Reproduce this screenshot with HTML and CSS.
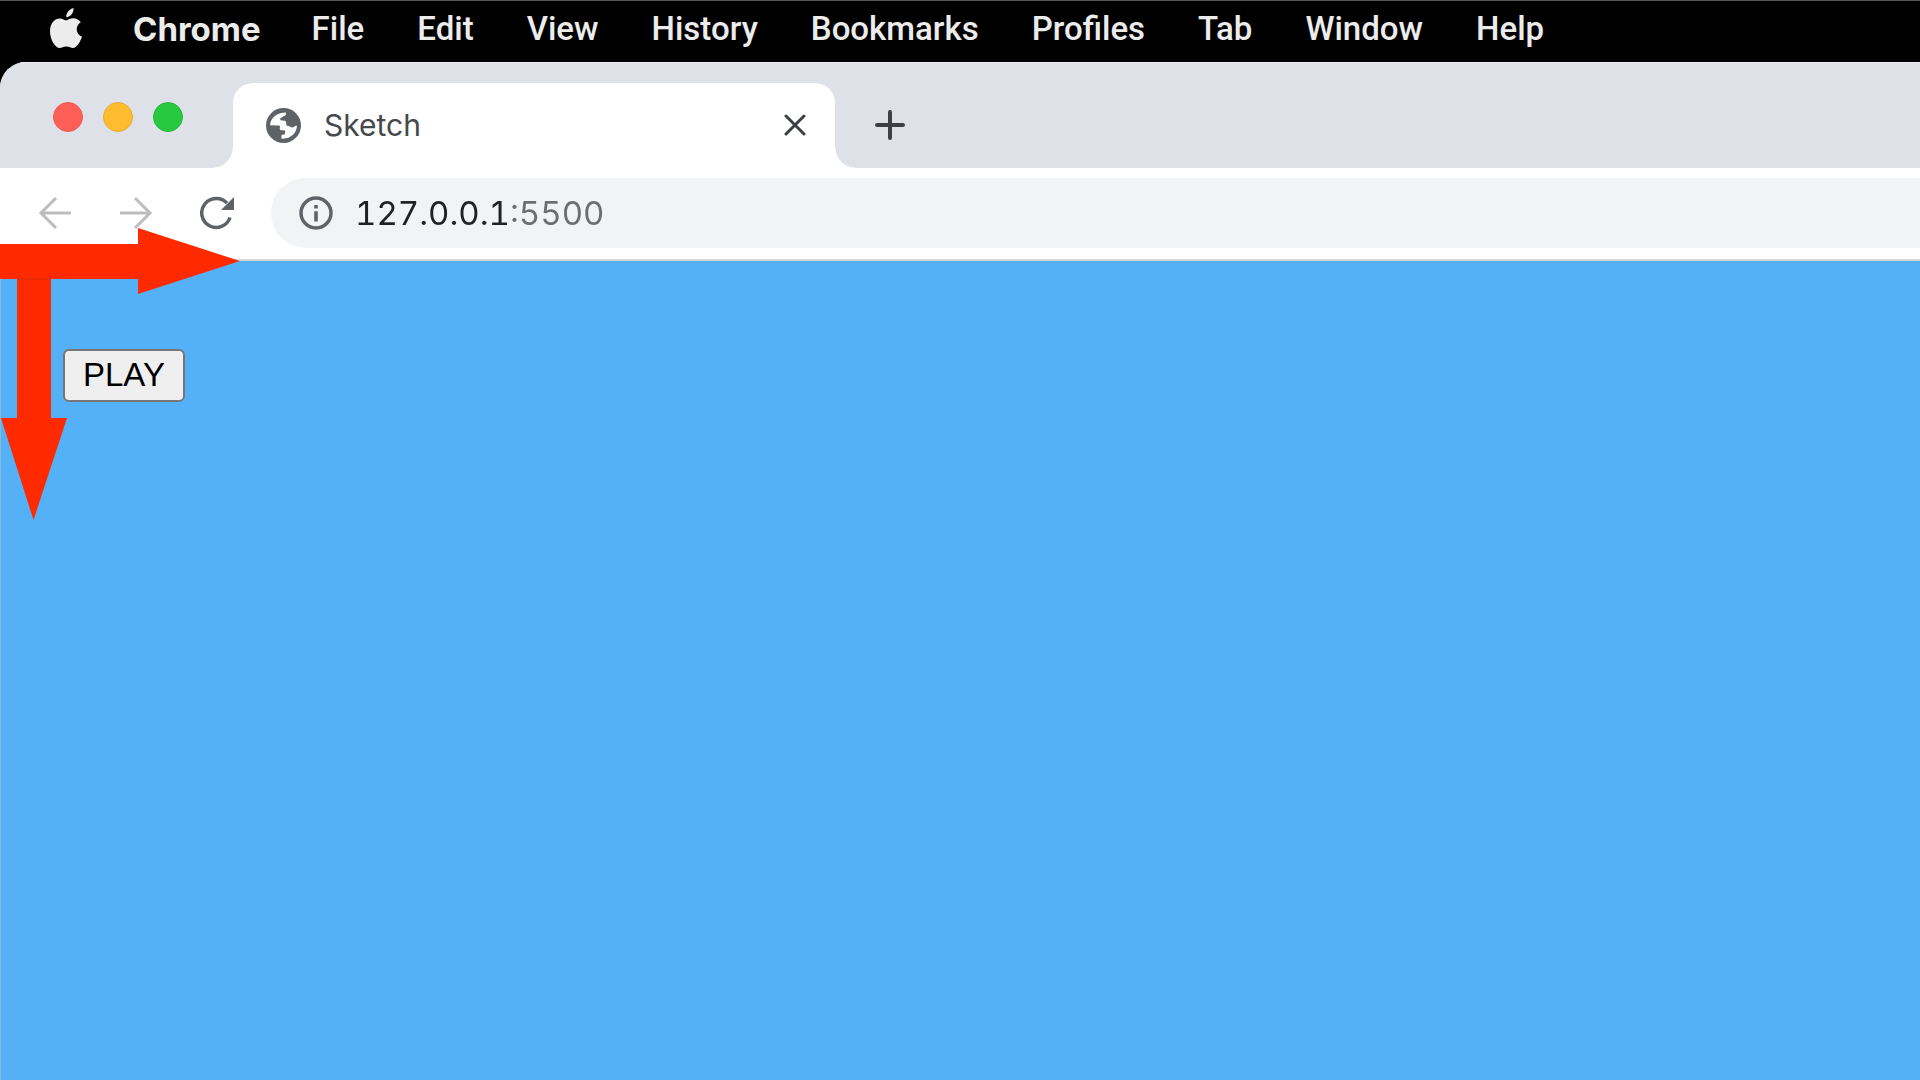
FILE: index.html
```html
<!DOCTYPE html>
<html lang="en">
<head>
<meta charset="utf-8">
<title>Sketch</title>
<link rel="stylesheet" href="styles.css">
</head>
<body>
<nav class="menubar" aria-label="Menu bar">
  <button class="menu apple" aria-label="Apple menu">
    <svg width="32" height="41" viewBox="0 0 32 41" fill="currentColor" aria-hidden="true">
      <path d="M23.500 0C24 4.500 20.500 9 16.300 9.200C15.800 5 19.500 .800 23.500 0Z"/>
      <path d="M16 12.400C17.700 12.400 19.800 10.300 23.200 10.300C26.500 10.300 29.300 12 30.800 14.300C24.800 18 25.700 26.200 32 28.800C30.500 33.200 27 40 23 40C20.500 40 19.500 38.400 16.400 38.400C13.200 38.400 12 40 9.700 40C5.500 40 0 32 0 23.200C0 15 5 10.500 9.800 10.500C12.800 10.500 14.500 12.400 16 12.400Z"/>
    </svg>
  </button>
  <button class="menu app">Chrome</button>
  <button class="menu">File</button>
  <button class="menu">Edit</button>
  <button class="menu">View</button>
  <button class="menu">History</button>
  <button class="menu">Bookmarks</button>
  <button class="menu">Profiles</button>
  <button class="menu">Tab</button>
  <button class="menu">Window</button>
  <button class="menu">Help</button>
</nav>
<div class="desktop">
  <div class="window">
    <header class="tabstrip">
      <div class="lights">
        <button class="light close" aria-label="Close window"></button>
        <button class="light minimize" aria-label="Minimize window"></button>
        <button class="light maximize" aria-label="Maximize window"></button>
      </div>
      <div class="tab">
        <svg class="globe" width="35" height="35" viewBox="48 39 104 104" aria-hidden="true">
          <circle cx="100" cy="91" r="52" fill="#5f6368"/>
          <path fill="#fff" d="M60 90C61 69 79 52 107 52V58C107 62 101 61 99 64C97 67 90 67 90 71C90 77 97 76 104 77C109 78 108 84 109 92C119 92 119 97 127 97C132 97 131 92 140 92C139 116 119 132 94 130V121C94 118 97 119 101 118C105 117 105 114 105 107C100 103 93 108 90 103C87 99 93 92 86 91Z"/>
        </svg>
        <span class="tab-title">Sketch</span>
        <button class="icon-button" aria-label="Close tab">
          <svg width="22" height="22" viewBox="0 0 22 22" aria-hidden="true"><path d="M2 2L20 20M20 2L2 20" fill="none" stroke="#3c4043" stroke-width="3" stroke-linecap="round"/></svg>
        </button>
      </div>
      <button class="icon-button new-tab" aria-label="New tab">
        <svg width="30" height="30" viewBox="0 0 30 30" aria-hidden="true"><path d="M15 2V28M2 15H28" fill="none" stroke="#3c4043" stroke-width="4" stroke-linecap="round"/></svg>
      </button>
    </header>
    <div class="toolbar">
      <div class="navigation">
        <button class="icon-button" aria-label="Back">
          <svg width="34" height="34" viewBox="0 0 34 34" fill="none" stroke="#bdbdbd" stroke-width="3" aria-hidden="true"><path d="M33 17H3M18 2L3 17L18 32"/></svg>
        </button>
        <button class="icon-button" aria-label="Forward">
          <svg width="34" height="34" viewBox="0 0 34 34" fill="none" stroke="#bdbdbd" stroke-width="3" aria-hidden="true"><path d="M1 17H31M16 2L31 17L16 32"/></svg>
        </button>
        <button class="icon-button" aria-label="Reload">
          <svg width="34" height="34" viewBox="0 0 34 34" aria-hidden="true"><path d="M30 21.500A14.500 14.500 0 1 1 27 7.200" fill="none" stroke="#5f6368" stroke-width="3.500"/><path d="M34 1V14H21Z" fill="#5f6368"/></svg>
        </button>
      </div>
      <div class="address">
        <svg width="34" height="34" viewBox="0 0 34 34" aria-hidden="true"><circle cx="17" cy="17" r="15" fill="none" stroke="#5f6368" stroke-width="3.500"/><path d="M15.200 9H18.800V12.500H15.200ZM15.200 15.200H18.800V25.500H15.200Z" fill="#5f6368"/></svg>
        <input class="url" type="text" value="127.0.0.1:5500" aria-label="Address" spellcheck="false">
      </div>
    </div>
    <main class="page">
      <button class="play">PLAY</button>
    </main>
    <svg class="arrows" width="242" height="294" viewBox="0 0 242 294" fill="#ff2a00" aria-hidden="true">
      <path d="M17 50H51V190H67L33.500 292L1 190H17Z"/>
      <path d="M0 16H138V0L240 33L138 66V51H0Z"/>
      <path d="M17 51H51" stroke="#d82a10" stroke-width="1"/>
    </svg>
  </div>
</div>
</body>
</html>
```
FILE: styles.css
```css
* { box-sizing: border-box; }

body {
  margin: 0;
  min-height: 100vh;
  display: flex;
  flex-direction: column;
  background: #000;
  font-family: Inter, "Liberation Sans", sans-serif;
}

button {
  margin: 0;
  padding: 0;
  border: 0;
  background: none;
  color: inherit;
  font: inherit;
}

svg { display: block; flex: none; }

.menubar {
  display: flex;
  align-items: center;
  gap: 53px;
  height: 62px;
  padding: 0 50px 6px;
  border-top: 1px solid #555;
  color: #ececec;
  font: 500 33px/40px Roboto, sans-serif;
}

.menu { white-space: nowrap; }
.apple, .app { margin-right: -2px; }
.app { font-family: Inter, sans-serif; font-weight: 700; }

.desktop {
  flex: 1;
  display: flex;
}

.window {
  position: relative;
  flex: 1;
  display: flex;
  flex-direction: column;
  overflow: hidden;
  border-top-left-radius: 26px;
  background: #fff;
}

.tabstrip {
  display: flex;
  align-items: flex-end;
  height: 106px;
  border-top: 1px solid #eee;
  background: #dee1e8;
}

.lights {
  display: flex;
  align-items: center;
  align-self: stretch;
  gap: 20px;
  width: 233px;
  padding: 2px 0 0 53px;
}

.light {
  width: 30px;
  height: 30px;
  border: 1px solid;
  border-radius: 50%;
}

.close { background: #ff5f57; border-color: #ec5a52; }
.minimize { background: #febc2e; border-color: #e5ab31; }
.maximize { background: #28c840; border-color: #27b63c; }

.tab {
  position: relative;
  display: flex;
  align-items: center;
  gap: 23px;
  width: 602px;
  height: 85px;
  padding: 0 29px 1px 33px;
  border-radius: 20px 20px 0 0;
  background: #fff;
}

.tab::before,
.tab::after {
  content: "";
  position: absolute;
  bottom: 0;
  width: 20px;
  height: 20px;
}

.tab::before {
  right: 100%;
  background: radial-gradient(circle at 0 0, transparent 19px, #fff 20px);
}

.tab::after {
  left: 100%;
  background: radial-gradient(circle at 100% 0, transparent 19px, #fff 20px);
}

.tab-title {
  flex: 1;
  color: #45484c;
  font-size: 30px;
  line-height: 36px;
}

.icon-button { display: block; }
.new-tab { margin: 0 0 28px 40px; }

.toolbar {
  display: flex;
  align-items: center;
  height: 93px;
  padding-bottom: 1px;
  border-bottom: 2px solid #d3d8dc;
}

.navigation {
  display: flex;
  gap: 47px;
  width: 271px;
  padding-left: 38px;
}

.address {
  flex: 1;
  display: flex;
  align-items: center;
  gap: 22px;
  height: 70px;
  padding-left: 28px;
  border-radius: 35px 0 0 35px;
  background: #f1f3f4;
}

.url {
  flex: 1;
  min-width: 0;
  padding: 0;
  border: 0;
  outline: 0;
  background: linear-gradient(to right, #202124 152px, #6b6e72 152px);
  background-clip: text;
  color: transparent;
  font: 400 33px/44px Inter, sans-serif;
  font-variant-numeric: tabular-nums;
}

.page {
  flex: 1;
  padding: 88px 62px;
  border-left: 1px solid #8fb8d8;
  background: #55b1f7;
}

.play {
  height: 53px;
  padding: 0 18px 2px;
  border: 2px solid #767676;
  border-radius: 6px;
  background: #efefef;
  color: #000;
  font: 33px/40px "Liberation Sans", sans-serif;
}

.arrows {
  position: absolute;
  top: 166px;
  left: 0;
}
```
